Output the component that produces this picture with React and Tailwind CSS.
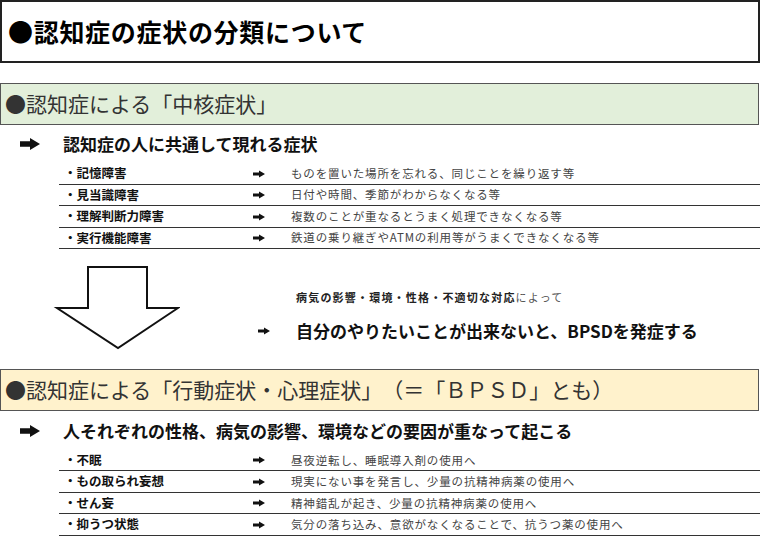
const jp = { fontFamily: '"Noto Sans CJK JP", "Noto Sans", sans-serif' };

const Arrow = ({ w = 12, h = 8 }) => (
  <svg width={w} height={h} viewBox="0 0 20 12" className="shrink-0">
    <path d="M0 3.3 H10 V0 L20 6 L10 12 V8.7 H0 Z" fill="#111" />
  </svg>
);

const core = [
  ["・記憶障害", "ものを置いた場所を忘れる、同じことを繰り返す等"],
  ["・見当識障害", "日付や時間、季節がわからなくなる等"],
  ["・理解判断力障害", "複数のことが重なるとうまく処理できなくなる等"],
  ["・実行機能障害", "鉄道の乗り継ぎやATMの利用等がうまくできなくなる等"],
];

const bpsd = [
  ["・不眠", "昼夜逆転し、睡眠導入剤の使用へ"],
  ["・もの取られ妄想", "現実にない事を発言し、少量の抗精神病薬の使用へ"],
  ["・せん妄", "精神錯乱が起き、少量の抗精神病薬の使用へ"],
  ["・抑うつ状態", "気分の落ち込み、意欲がなくなることで、抗うつ薬の使用へ"],
];

const Rows = ({ items }) => (
  <div className="ml-[59px] flex flex-col">
    {items.map(([label, desc]) => (
      <div key={label} className="flex h-[21.5px] items-center border-b border-[#333]">
        <span className="w-[194px] pl-[5px] text-[12.5px] font-bold text-[#111]">{label}</span>
        <Arrow />
        <span className="ml-[26px] text-[11.5px] tracking-[0.85px] text-[#444]">{desc}</span>
      </div>
    ))}
  </div>
);

const Heading = ({ bg, children }) => (
  <div className={`flex h-[42px] w-[759px] items-center border border-[#555] pl-[4px] text-[21px] text-[#333] ${bg}`}>
    {children}
  </div>
);

const Sub = ({ children }) => (
  <div className="flex h-[39px] items-center pl-[20px]">
    <Arrow w={20} h={12} />
    <span className="ml-[23px] text-[17px] font-bold text-[#111]">{children}</span>
  </div>
);

export default function App() {
  return (
    <div className="flex h-[536px] w-[760px] flex-col overflow-hidden bg-white [text-spacing-trim:space-all]" style={jp}>
      <div className="flex h-[63px] w-[760px] items-center border-2 border-[#222] pl-[6px] text-[25px] font-bold tracking-[0.7px] text-black">
        ●認知症の症状の分類について
      </div>
      <div className="h-[20px]" />
      <Heading bg="bg-[#e2efda]">●認知症による「中核症状」</Heading>
      <Sub>認知症の人に共通して現れる症状</Sub>
      <Rows items={core} />
      <div className="flex h-[120px]">
        <svg width="180" height="120" viewBox="0 0 180 120" className="shrink-0">
          <polygon
            points="88,18 147,18 147,59 178,59 118,99 57,59 88,59"
            fill="white"
            stroke="#111"
            strokeWidth="2"
            strokeLinejoin="miter"
          />
        </svg>
        <div className="ml-[78px] flex flex-col pt-[40px]">
          <div className="pl-[38px] text-[11px] tracking-[1.2px] text-[#222]">
            <span className="font-bold">病気の影響・環境・性格・不適切な対応</span>
            <span className="text-[#555]">によって</span>
          </div>
          <div className="mt-[12px] flex items-center">
            <Arrow />
            <span className="ml-[26px] text-[17px] font-bold text-[#111]">
              自分のやりたいことが出来ないと、BPSDを発症する
            </span>
          </div>
        </div>
      </div>
      <Heading bg="bg-[#fff2cc]">●認知症による「行動症状・心理症状」（＝「ＢＰＳＤ」とも）</Heading>
      <Sub>人それぞれの性格、病気の影響、環境などの要因が重なって起こる</Sub>
      <Rows items={bpsd} />
    </div>
  );
}
